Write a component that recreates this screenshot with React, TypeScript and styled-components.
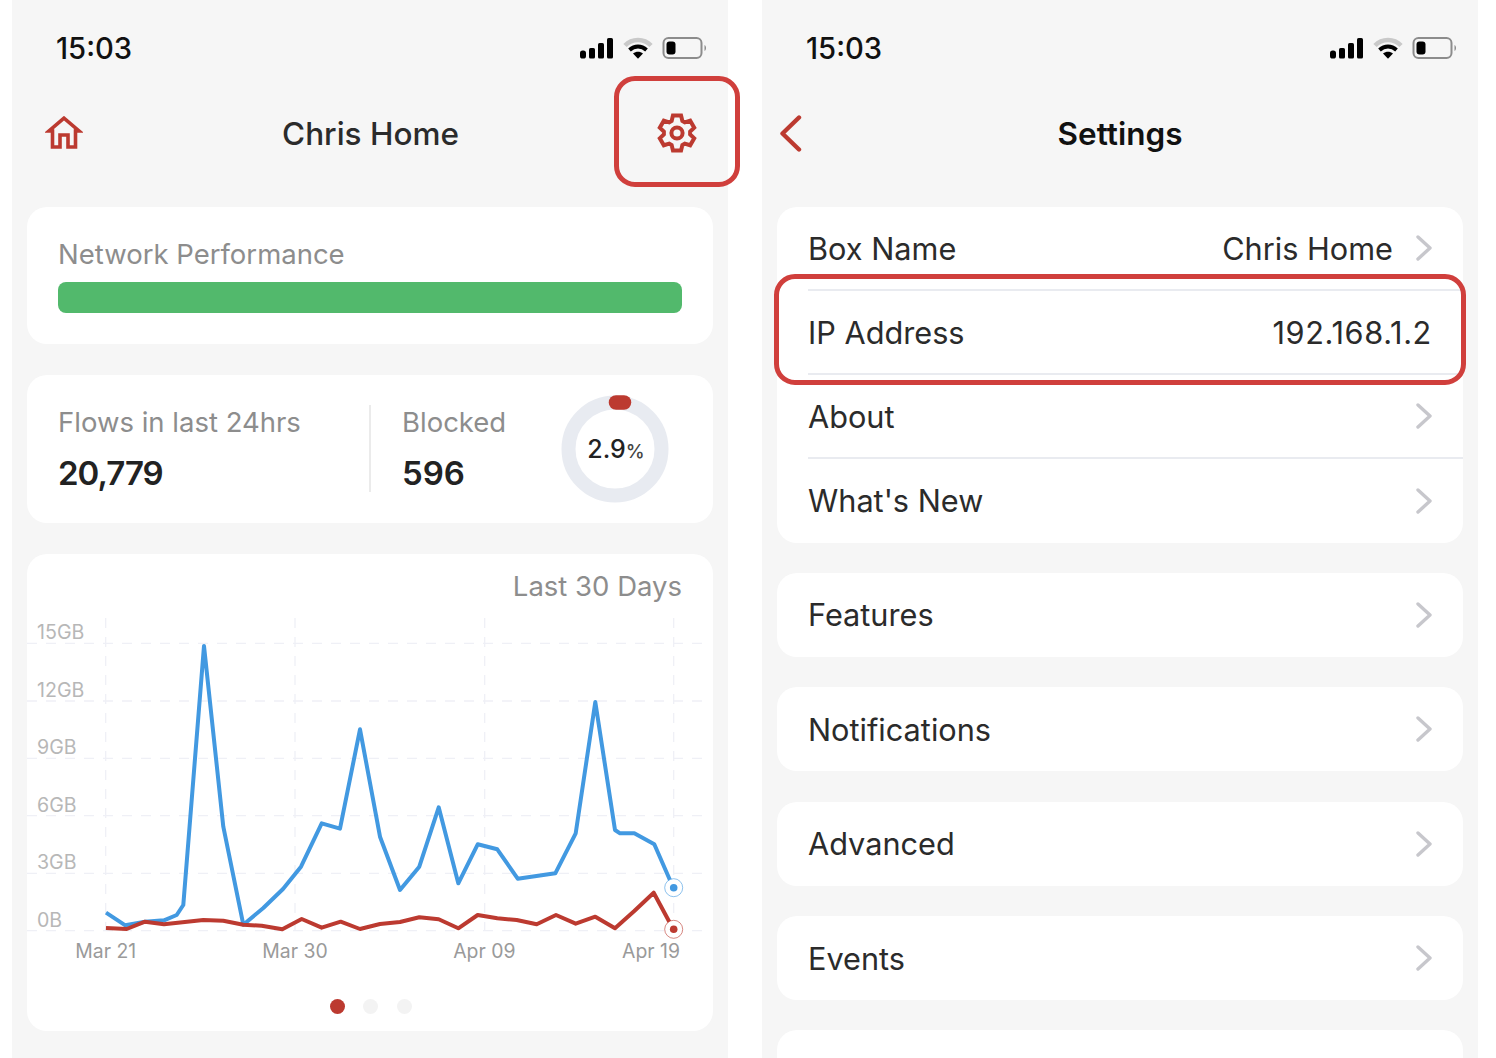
import React from "react";
import styled, { createGlobalStyle } from "styled-components";

const Global = createGlobalStyle`
  html, body { margin: 0; padding: 0; background: #fff; }
  body { font-family: Inter, "Noto Sans", sans-serif; overflow: hidden; }
`;

const RED = "#bc3a30";
const MARK = "#d03f3c";
const BLUE = "#4299e1";

const Page = styled.div`
  display: flex;
  gap: 34px;
  width: 1496px;
  height: 1058px;
  padding-left: 12px;
  box-sizing: border-box;
  overflow: hidden;
`;
const Phone = styled.section`
  width: 716px;
  height: 1058px;
  flex: none;
  background: #f6f6f6;
`;
const StatusBar = styled.div`
  height: 76px;
  display: flex;
  align-items: flex-start;
  justify-content: space-between;
  padding: 37px 20px 0 44px;
  box-sizing: border-box;
`;
const Time = styled.span`
  font-size: 29.2px;
  line-height: 23px;
  font-weight: 500;
  color: #111;
`;
const Header = styled.header`
  position: relative;
  height: 114px;
  display: grid;
  grid-template-columns: 1fr auto 1fr;
  align-items: center;
  padding: 0 32px 0 ${(p: { $left: number }) => p.$left}px;
  box-sizing: border-box;
`;
const HeaderEnd = styled.div`
  display: flex;
  justify-content: ${(p: { $end?: boolean }) => (p.$end ? "flex-end" : "flex-start")};
  align-items: center;
`;
const Title = styled.h1<{ $dark?: boolean; $shift: number }>`
  margin: 0;
  font-size: 31.5px;
  font-weight: ${(p) => (p.$dark ? 600 : 500)};
  color: ${(p) => (p.$dark ? "#111" : "#2b2b2b")};
  transform: translateX(${(p) => p.$shift}px);
`;
const Mark = styled.div`
  position: absolute;
  border: 5px solid ${MARK};
  border-radius: 21px;
  box-sizing: border-box;
  height: 111px;
  pointer-events: none;
`;
const GearMark = styled(Mark)`
  top: 0;
  right: -12px;
  width: 126px;
`;
const IpMark = styled(Mark)`
  top: 67.5px;
  left: -3px;
  right: -3px;
`;
const Stack = styled.div`
  display: flex;
  flex-direction: column;
  padding: 16.5px 15px 0;
  gap: ${(p: { $gap: number }) => p.$gap}px;
`;
const Card = styled.div`
  position: relative;
  background: #fff;
  border-radius: 20px;
  flex: none;
`;
const NetCard = styled(Card)`
  height: 137px;
  padding: 31.5px 31px 0;
  box-sizing: border-box;
`;
const Muted = styled.div`
  font-size: 27.5px;
  line-height: 33px;
  color: #8d8d8d;
`;
const Bar = styled.div`
  height: 31px;
  margin-top: 11px;
  border-radius: 8px;
  background: #52b96c;
`;
const StatsCard = styled(Card)`
  height: 148px;
  display: flex;
  align-items: center;
  box-sizing: border-box;
  padding-left: 31px;
`;
const Stat = styled.div`
  display: flex;
  flex-direction: column;
  gap: 14px;
  height: 87px;
  justify-content: center;
  box-sizing: border-box;
  padding-top: 2px;
`;
const FlowStat = styled(Stat)`
  width: 313px;
  border-right: 2px solid #ebebeb;
`;
const BlockStat = styled(Stat)`
  width: 160px;
  padding-left: 31px;
  box-sizing: content-box;
`;
const Value = styled.div<{ $tight?: boolean }>`
  font-size: 33px;
  line-height: 40px;
  font-weight: 600;
  color: #222;
  letter-spacing: ${(p) => (p.$tight ? "-1px" : "0")};
`;
const Donut = styled.svg`
  display: block;
  flex: none;
  width: 110px;
  height: 110px;
  margin-left: -2px;
`;
const ChartCard = styled(Card)`
  height: 477px;
`;
const ChartTitle = styled(Muted)`
  text-align: right;
  padding: 16px 31px 0;
`;
const ChartSvg = styled.svg`
  display: block;
  width: 686px;
  height: 370px;
  margin-top: 3px;
`;
const Pager = styled.div`
  display: flex;
  justify-content: center;
  gap: 18.5px;
  margin-top: 23px;
  padding-left: 1px;
`;
const Dot = styled.span`
  width: 15px;
  height: 15px;
  border-radius: 50%;
  background: ${(p: { $on?: boolean }) => (p.$on ? RED : "#f3f3f3")};
`;
const RowCard = styled(Card)`
  padding-left: 31px;
`;
const Row = styled.div<{ $h: number; $line?: boolean }>`
  height: ${(p) => p.$h}px;
  box-sizing: border-box;
  display: flex;
  align-items: center;
  justify-content: space-between;
  padding-right: 31px;
  padding-top: ${(p) => (p.$line ? "1.5px" : "0")};
  font-size: 30.7px;
  color: #2b2b2b;
  border-bottom: ${(p) => (p.$line ? "2px solid #e9ebf0" : "none")};
`;
const RowEnd = styled.div<{ $spaced?: boolean }>`
  display: flex;
  align-items: center;
  gap: 23px;
  letter-spacing: ${(p) => (p.$spaced ? "0.65px" : "0")};
`;

const ICON_PROPS = { fill: "none", strokeLinecap: "round", strokeLinejoin: "round" } as const;

const Chevron = () => (
  <svg width="16" height="26" viewBox="0 0 16 26" {...ICON_PROPS} stroke="#c7c7cc" strokeWidth="3.4">
    <path d="M2 2l12 11L2 24" />
  </svg>
);

const Back = () => (
  <svg width="23" height="37" viewBox="0 0 23 37" {...ICON_PROPS} stroke={RED} strokeWidth="4.4">
    <path d="M19 2.5L2.5 18.5l16.5 16" />
  </svg>
);

const Home = () => (
  <svg width="38" height="34" viewBox="0 0 38 34" fill="none" stroke={RED} strokeWidth="3.6" strokeLinejoin="miter">
    <path d="M19 2.2L4 15H7.5V31H15V19H23V31H30.5V15H34Z" />
  </svg>
);

const gearPath = () => {
  const pts: string[] = [];
  const add = (r: number, deg: number) => {
    const a = (deg * Math.PI) / 180;
    pts.push(`${(21 + r * Math.cos(a)).toFixed(2)} ${(21 + r * Math.sin(a)).toFixed(2)}`);
  };
  for (let i = 0; i < 6; i++) {
    const c = -90 + i * 60;
    add(13.2, c - 24);
    add(18, c - 13);
    add(18, c + 13);
    add(13.2, c + 24);
  }
  return `M${pts.join("L")}Z`;
};

const GearIcon = styled.svg`
  display: block;
  margin-right: -2px;
`;

const Gear = () => (
  <GearIcon width="42" height="42" viewBox="0 0 42 42" fill="none" stroke={RED} strokeWidth="4" strokeLinejoin="miter">
    <path d={gearPath()} />
    <circle cx="21" cy="21" r="5.6" />
  </GearIcon>
);

const StatusIcons = () => (
  <svg width="128" height="23" viewBox="0 0 128 23">
    <rect x="0" y="13.5" width="6" height="8" rx="2.6" fill="#000" />
    <rect x="9" y="11" width="6" height="10.5" rx="1.6" fill="#000" />
    <rect x="18" y="6" width="6" height="15.5" rx="1.6" fill="#000" />
    <rect x="27" y="1" width="6" height="20.5" rx="1.6" fill="#000" />
    <path d="M45 8.5C52 1 64 1 71 8.5" fill="none" stroke="#c9c9c9" strokeWidth="4.5" />
    <path d="M49.5 13C54.5 8.3 61.5 8.3 66.5 13" fill="none" stroke="#000" strokeWidth="3.8" />
    <path d="M53 16.5C56 14 60 14 63 16.5L58 21.8Z" fill="#000" />
    <rect x="83.5" y="1" width="38" height="20" rx="5" fill="none" stroke="#8c8c8c" strokeWidth="2" />
    <rect x="86.5" y="4.5" width="9" height="13" rx="3" fill="#000" />
    <path d="M124.5 8c2 .8 2 5.2 0 6z" fill="#8c8c8c" />
  </svg>
);

const BLUE_LINE =
  "106,912.7 125.3,925.3 145,921.7 164,920.3 176.7,915 183.3,905 204,646 223.3,826.7 243.3,924.7 263.3,908 283,889 301,866.7 321.7,823.3 340,828.7 360,729.3 380,836.7 400,890 419.3,866.7 438.7,807.3 458.3,883.3 477.7,844.3 497.3,849.3 517.7,878.7 555.3,873.3 575.7,833.3 595.3,702 615,830 620,833.3 634.3,833.3 654.3,844.3 673.3,887.7";
const RED_LINE =
  "106,928 126.7,929 145,921.7 164,924.3 203.3,920 223.3,920.7 243.3,924.7 261.7,925.7 282.3,929.3 301.7,919 321.7,927.7 340.7,921.7 360,929 380,924 400,922 419.3,917.3 438.7,919.3 458.3,928.3 477.7,915 497.3,918.3 516.7,920 536.7,924.3 556,915 575.7,923.7 595.3,916.7 615,928.3 634.3,911 653.7,892.7 673.3,929.3";

const GRID_Y = [643.3, 701, 758.3, 815.7, 873.3, 930.7];
const GRID_X = [105.7, 295, 484.7, 673.7];
const Y_LABELS = ["15GB", "12GB", "9GB", "6GB", "3GB", "0B"];

const Chart = () => (
  <ChartSvg viewBox="27 606 686 370" fontFamily="Inter, sans-serif">
    {GRID_Y.map((y) => (
      <line key={y} x1="27" x2="707" y1={y} y2={y} stroke="#eff0f6" strokeWidth="1.3" strokeDasharray="10 9" />
    ))}
    {GRID_X.map((x) => (
      <line key={x} x1={x} x2={x} y1="618" y2="931" stroke="#eff0f6" strokeWidth="1.3" strokeDasharray="10 9" />
    ))}
    {Y_LABELS.map((t, i) => (
      <text key={t} x="37" y={639 + i * 57.6} fontSize="19.6" fill="#b7b7b7">
        {t}
      </text>
    ))}
    <g fontSize="19.4" fill="#9a9a9a" textAnchor="middle">
      <text x="105.7" y="958">Mar 21</text>
      <text x="295" y="958">Mar 30</text>
      <text x="484.3" y="958">Apr 09</text>
      <text x="651" y="958">Apr 19</text>
    </g>
    <polyline points={BLUE_LINE} fill="none" stroke={BLUE} strokeWidth="4" strokeLinejoin="round" />
    <polyline points={RED_LINE} fill="none" stroke={RED} strokeWidth="4" strokeLinejoin="round" />
    <circle cx="673.7" cy="887.7" r="9" fill="#fff" stroke={BLUE} strokeOpacity=".6" />
    <circle cx="673.7" cy="887.7" r="3.8" fill={BLUE} />
    <circle cx="673.7" cy="929.3" r="9" fill="#fff" stroke={RED} strokeOpacity=".6" />
    <circle cx="673.7" cy="929.3" r="3.8" fill={RED} />
  </ChartSvg>
);

const Status = () => (
  <StatusBar>
    <Time>15:03</Time>
    <StatusIcons />
  </StatusBar>
);

const SETTINGS_GROUPS = ["Features", "Notifications", "Advanced", "Events", ""];

export default function App() {
  return (
    <Page>
      <Global />
      <Phone>
        <Status />
        <Header $left={33}>
          <HeaderEnd>
            <Home />
          </HeaderEnd>
          <Title $shift={0}>Chris Home</Title>
          <HeaderEnd $end>
            <Gear />
          </HeaderEnd>
          <GearMark />
        </Header>
        <Stack $gap={31}>
          <NetCard>
            <Muted>Network Performance</Muted>
            <Bar />
          </NetCard>
          <StatsCard>
            <FlowStat>
              <Muted>Flows in last 24hrs</Muted>
              <Value $tight>20,779</Value>
            </FlowStat>
            <BlockStat>
              <Muted>Blocked</Muted>
              <Value>596</Value>
            </BlockStat>
            <Donut viewBox="0 0 110 110" fontFamily="Inter, sans-serif">
              <circle cx="55" cy="55" r="46.5" fill="none" stroke="#e8ebf1" strokeWidth="14" />
              <path d="M56 8.5h8" fill="none" stroke={RED} strokeWidth="14.5" strokeLinecap="round" />
              <text x="56" y="64" textAnchor="middle" fill="#222" fontSize="25" fontWeight="500">
                2.9<tspan fontSize="19" fill="#444">%</tspan>
              </text>
            </Donut>
          </StatsCard>
          <ChartCard>
            <ChartTitle>Last 30 Days</ChartTitle>
            <Chart />
            <Pager>
              <Dot $on />
              <Dot />
              <Dot />
            </Pager>
          </ChartCard>
        </Stack>
      </Phone>
      <Phone>
        <Status />
        <Header $left={18}>
          <HeaderEnd>
            <Back />
          </HeaderEnd>
          <Title $shift={7} $dark>
            Settings
          </Title>
          <HeaderEnd />
        </Header>
        <Stack $gap={30.4}>
          <RowCard>
            <Row $h={84} $line>
              Box Name
              <RowEnd>
                Chris Home
                <Chevron />
              </RowEnd>
            </Row>
            <Row $h={84} $line>
              IP Address
              <RowEnd $spaced>192.168.1.2</RowEnd>
            </Row>
            <Row $h={84} $line>
              About
              <RowEnd>
                <Chevron />
              </RowEnd>
            </Row>
            <Row $h={84}>
              What's New
              <RowEnd>
                <Chevron />
              </RowEnd>
            </Row>
            <IpMark />
          </RowCard>
          {SETTINGS_GROUPS.map((label) => (
            <RowCard key={label}>
              <Row $h={84}>
                {label}
                <RowEnd>
                  <Chevron />
                </RowEnd>
              </Row>
            </RowCard>
          ))}
        </Stack>
      </Phone>
    </Page>
  );
}
